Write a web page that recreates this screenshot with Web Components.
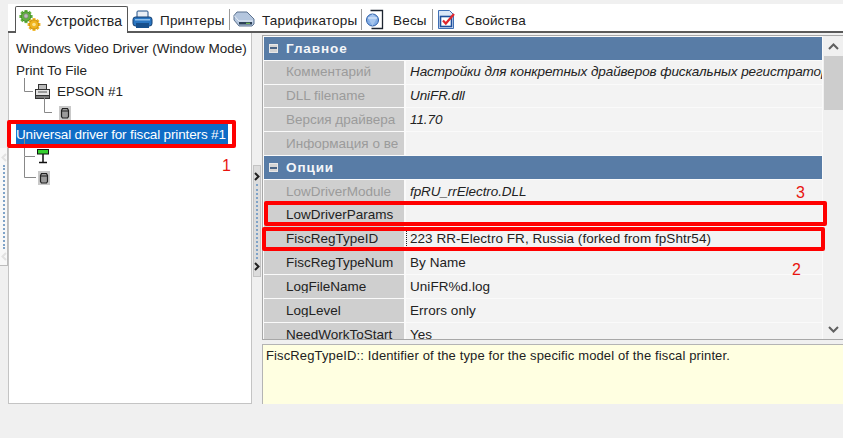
<!DOCTYPE html>
<html lang="ru"><head><meta charset="utf-8"><title>Устройства</title>
<style>
html,body{margin:0;height:100%;overflow:hidden;background:#f0f0f0}
body{font:13px/1 "Liberation Sans",Arial,sans-serif;color:#222}
</style></head><body>
<x-app>
  <x-tabs slot="tabs">
    <x-tab active label="Устройства" icon="gears" w="75"></x-tab>
    <x-tab label="Принтеры" icon="printer" w="64" gap="7" pl="4"></x-tab>
    <x-tab label="Тарификаторы" icon="disk" w="94" gap="7" pl="3"></x-tab>
    <x-tab label="Весы" icon="scale" w="34" gap="8" pl="3"></x-tab>
    <x-tab label="Свойства" icon="props" w="60" gap="9" pl="4" last></x-tab>
  </x-tabs>
  <x-tree slot="tree">
    <x-node label="Windows Video Driver (Window Mode)"></x-node>
    <x-node label="Print To File"></x-node>
    <x-node label="EPSON #1" icon="printer" level="1"></x-node>
    <x-node icon="drawer" level="2"></x-node>
    <x-node label="Universal driver for fiscal printers #1" selected></x-node>
    <x-node icon="display" level="1" kind="mid"></x-node>
    <x-node icon="drawer" level="1" kind="end"></x-node>
  </x-tree>
  <x-grid slot="grid">
    <x-section label="Главное"></x-section>
    <x-prop label="Комментарий" value="Настройки для конкретных драйверов фискальных регистраторов" dim ital></x-prop>
    <x-prop label="DLL filename" value="UniFR.dll" dim ital></x-prop>
    <x-prop label="Версия драйвера" value="11.70" dim ital></x-prop>
    <x-prop label="Информация о версии" dim></x-prop>
    <x-section label="Опции"></x-section>
    <x-prop label="LowDriverModule" value="fpRU_rrElectro.DLL" dim ital></x-prop>
    <x-prop label="LowDriverParams"></x-prop>
    <x-prop label="FiscRegTypeID" value="223 RR-Electro FR, Russia (forked from fpShtr54)" focus></x-prop>
    <x-prop label="FiscRegTypeNum" value="By Name"></x-prop>
    <x-prop label="LogFileName" value="UniFR%d.log"></x-prop>
    <x-prop label="LogLevel" value="Errors only"></x-prop>
    <x-prop label="NeedWorkToStart" value="Yes"></x-prop>
  </x-grid>
  <x-help slot="help">FiscRegTypeID:: Identifier of the type for the specific model of the fiscal printer.</x-help>
  <x-callout slot="over" x="7" y="120" w="229" h="28" n="1" nx="222" ny="157"></x-callout>
  <x-callout slot="over" x="264" y="201" w="563" h="25" n="3" nx="796" ny="184"></x-callout>
  <x-callout slot="over" x="262" y="227" w="563" h="24" n="2" nx="792" ny="261"></x-callout>
</x-app>
<script>
const gear=(cx,cy,r,f,s)=>{let t="";for(let i=0;i<8;i++){t+=`<rect x="${cx-1.5}" y="${cy-r-1.8}" width="3" height="3.500" fill="${f}" transform="rotate(${i*45} ${cx} ${cy})"/>`}return t+`<circle cx="${cx}" cy="${cy}" r="${r}" fill="${f}" stroke="${s}" stroke-width=".7"/>`};
const ICONS={
gears:`<svg width="22" height="21" viewBox="0 0 22 21">${gear(7,6.500,4.800,"#63b33f","#3a7a26")}<circle cx="7" cy="6" r="2.200" fill="#bdbdbd" stroke="#777" stroke-width=".6"/>${gear(15,14.500,4.600,"#f0b41e","#b7800c")}<circle cx="15" cy="14.500" r="1.800" fill="#fbe38f"/></svg>`,
printer:`<svg width="21" height="20" viewBox="0 0 21 20"><rect x="5" y="1" width="11" height="7" rx="1" fill="#e9eff6" stroke="#1f4f86"/><rect x="1" y="7" width="19" height="9" rx="2.500" fill="#2a76c2" stroke="#143f70"/><rect x="4" y="13" width="13" height="5" fill="#164f8c"/><rect x="3" y="9" width="15" height="1.500" fill="#8fc0ec"/></svg>`,
disk:`<svg width="22" height="20" viewBox="0 0 22 20"><path d="M1 5.500 4 2h10l7 7v5l-2 2H6L1 10z" fill="#b4c6de" stroke="#5d7390"/><path d="M1.500 6 6 11h14" fill="none" stroke="#e6eef8"/><path d="M6 12h13v2.500H6z" fill="#2e4258"/><rect x="13" y="12.800" width="4" height="1" fill="#7fd05a"/></svg>`,
scale:`<svg width="20" height="21" viewBox="0 0 20 21"><path d="M5.500 1.500h12v18h-11" fill="#fff" stroke="#1c2430" stroke-width="1.300"/><circle cx="7.500" cy="11" r="6" fill="#84aee6" stroke="#2c5ea8"/><path d="M3 9l4.500-4 4.500 4-4.500 8z" fill="#a6c6ef"/><path d="M3 9h9" stroke="#e4effc"/></svg>`,
props:`<svg width="19" height="21" viewBox="0 0 19 21"><path d="M1.500 1.500h11l4 4v14h-15z" fill="#d9e6f7" stroke="#3f6fb5"/><rect x="3.500" y="7.500" width="11" height="10" fill="#fff" stroke="#1e4f9c" stroke-width="1.600"/><path d="M6 11.500l2.800 3L17 5" fill="none" stroke="#e0262c" stroke-width="2.200"/></svg>`,
treeprinter:`<svg width="17" height="17" viewBox="0 0 17 17"><rect x="4.500" y="1.500" width="8" height="5" fill="#bbb" stroke="#333"/><rect x="1.500" y="6.500" width="14" height="6" fill="#e4e4e4" stroke="#333"/><rect x="1.500" y="12.500" width="14" height="3" fill="#777" stroke="#333"/><path d="M4 9h9" stroke="#555"/></svg>`,
drawer:`<svg width="12" height="14" viewBox="0 0 12 14"><rect width="12" height="14" fill="#c9c9c9"/><path d="M3.500 2.500h5l1 2v6l-1 1.500h-5l-1-1.500v-6z" fill="#9a9a9a" stroke="#222" stroke-width="1.200"/><path d="M3 5h6" stroke="#222"/></svg>`,
display:`<svg width="12" height="15" viewBox="0 0 12 15"><rect x=".5" y=".5" width="11" height="4.500" fill="#35d02f" stroke="#111"/><path d="M6 5v8M2 13.500h8" stroke="#111" stroke-width="1.500"/></svg>`
};
const chev=(c,d)=>`<svg width="6" height="9" viewBox="0 0 6 9"><path d="${d}" fill="none" stroke="${c}" stroke-width="2"/></svg>`;
const def=(name,css,html)=>customElements.define(name,class extends HTMLElement{
  connectedCallback(){
    if(this.shadowRoot)return;
    const a=n=>this.getAttribute(n)??"";
    this.attachShadow({mode:"open"}).innerHTML=`<style>${css}</style>`+html(a,n=>this.hasAttribute(n));
  }});
def("x-app",`
:host{display:flex;flex-direction:column;width:843px;height:438px;position:relative;overflow:hidden;background:#f0f0f0}
.top{height:4px;flex:none}
.tabs{flex:none;margin-left:8px}
main{flex:none;height:371px;display:flex}
.gut{width:8px;flex:none;padding-top:115px;box-sizing:border-box}
.grip{height:118px;background:#f8f8f8;border-right:1px solid #bcbcbc;border-bottom:1px solid #bcbcbc;box-sizing:border-box;display:flex;flex-direction:column;align-items:center;justify-content:space-between;padding:5px 0 4px}
.tree{width:244px;flex:none;display:flex}
.split{width:10px;flex:none;padding-top:132px;box-sizing:border-box}
.btn{height:112px;margin:0 1px;background:#dcdcdc;border:1px solid #c4c4c4;box-sizing:border-box;display:flex;flex-direction:column;align-items:center;justify-content:space-between;padding:6px 0 5px}
.dots{flex:1;width:0;margin:3px 0;border-left:2px dotted #7fa3c8}
.right{flex:1;min-width:0;display:flex;flex-direction:column;padding-top:2px}
.grid{height:305px;flex:none;display:flex}
.help{height:60px;margin-top:4px;flex:none;display:flex}
`,()=>`<div class="top"></div><div class="tabs"><slot name="tabs"></slot></div>
<main><div class="gut"><div class="grip">${chev("#e2e2e2","M5 1 1.500 4.500 5 8")}<i class="dots"></i>${chev("#e2e2e2","M5 1 1.500 4.500 5 8")}</div></div><div class="tree"><slot name="tree"></slot></div>
<div class="split"><div class="btn">${chev("#222","M1 1 4.500 4.500 1 8")}<i class="dots"></i>${chev("#222","M1 1 4.500 4.500 1 8")}</div></div>
<div class="right"><div class="grid"><slot name="grid"></slot></div><div class="help"><slot name="help"></slot></div></div></main>
<slot name="over"></slot>`);
def("x-tabs",`:host{display:flex;height:29px;box-sizing:border-box;background:#fff;padding-left:7px;padding-top:2px;border-bottom:2px solid #5a5a5a;align-items:stretch}`,()=>`<slot></slot>`);
def("x-tab",`
:host{display:flex;align-items:center;color:#222;font-size:13.500px;white-space:nowrap}
:host([active]){height:27px;background:#fff;border:1px solid #555;border-bottom:0;border-radius:2px 2px 0 0;box-sizing:border-box;width:113px;padding-left:3px;z-index:1;font-size:14px}
:host([active]) svg{margin-right:6px}
svg{display:block;flex:none}
:host(:not([active])){padding-right:5px;border-right:1px solid #9a9a9a;height:21px;margin-top:3px}
:host([last]){border-right:0!important}
span{display:block;letter-spacing:.2px;padding-top:2px}
`,a=>`<style>:host{padding-left:${a("pl")||3}px}svg{margin-right:${a("gap")||7}px}span{width:${a("w")}px}</style>${ICONS[a("icon")]}<span>${a("label")}</span>`);
def("x-tree",`:host{display:block;flex:1;background:#fff;border:1px solid #c4c4c4;border-top:0;padding:5px 0 0 0;box-sizing:border-box}`,()=>`<slot></slot>`);
def("x-node",`
:host{display:flex;align-items:center;height:21.500px;font-size:13.500px;color:#222;white-space:nowrap}
.sel{background:#0f6cc6;color:#fff;outline:1px dotted #fff;height:22px;line-height:21px;box-sizing:border-box;width:212px;margin-top:1px;letter-spacing:-.14px}
.c{flex:none;display:block;overflow:visible}
.t{display:block}.ic{display:flex;flex:none;margin-right:6px}
`,(a,h)=>{
  const lv=+a("level")||0,k=a("kind"),ic=a("icon");
  let left=7,conn="";
  if(lv==1&&!k){conn=`<svg class="c" width="10" height="20" style="margin-left:15px"><path d="M.5-4V9.500H9" fill="none" stroke="#888"/></svg>`;left=0}
  if(lv==2){conn=`<svg class="c" width="15" height="20" style="margin-left:35px"><path d="M.5-6V9.500H8" fill="none" stroke="#888"/></svg>`;left=0}
  if(k=="mid"){conn=`<svg class="c" width="13" height="20" style="margin-left:15px"><path d="M.5-8V10.500H11" fill="none" stroke="#888"/></svg>`;left=0}
  if(k=="end"){conn=`<svg class="c" width="14" height="20" style="margin-left:15px"><path d="M.5-11V9.500H12" fill="none" stroke="#888"/></svg>`;left=0}
  const key=ic=="printer"?"treeprinter":ic;
  return `<div style="width:${left}px;flex:none"></div>${conn}${ic?`<span class="ic">${ICONS[key]}</span>`:""}${a("label")?`<span class="t ${h("selected")?"sel":""}">${a("label")}</span>`:""}`;
});
def("x-grid",`
:host{display:flex;flex:1;min-width:0;border-left:1px solid #a8a8a8;border-top:1px solid #a8a8a8;border-bottom:1px solid #a8a8a8;box-sizing:border-box;overflow:hidden}
.list{flex:1;min-width:0;padding:1px 0 0 1px;overflow:hidden;display:flex;flex-direction:column;gap:1px;background:#fafafa}
.sb{width:21px;flex:none;background:#f0f0f0;display:flex;flex-direction:column;border-left:1px solid #fafafa;box-sizing:border-box;align-items:stretch}
.a{height:20px;display:flex;align-items:center;justify-content:center;flex:none}
.thumb{height:54px;background:#cdcdcd;flex:none;margin:0 0 0 1px}
.fill{flex:1}
`,()=>`<div class="list"><slot></slot></div><div class="sb">
<div class="a"><svg width="11" height="7"><path d="M1 6 5.500 1.500 10 6" fill="none" stroke="#606060" stroke-width="2"/></svg></div>
<div class="thumb"></div><div class="fill"></div>
<div class="a"><svg width="11" height="7"><path d="M1 1 5.500 5.500 10 1" fill="none" stroke="#606060" stroke-width="2"/></svg></div></div>`);
def("x-section",`
:host{display:flex;align-items:center;height:22.830px;flex:none;background:#587ca6;color:#f4f6f9;font-weight:bold;font-size:13.500px;letter-spacing:.9px;padding-left:5px;box-sizing:border-box}
b{width:9px;height:9px;background:#d4d4d4;border:1px solid #e8e8e8;margin-right:8px;display:flex;align-items:center;justify-content:center;box-sizing:border-box}
b::after{content:"";width:7px;height:2px;background:#4a6485}
`,a=>`<b></b><span>${a("label")}</span>`);
def("x-prop",`
:host{display:flex;height:22.830px;flex:none;font-size:13.500px;color:#222;white-space:nowrap}
.l{width:140px;flex:none;background:#cfcfcf;padding-left:22px;box-sizing:border-box;display:flex;align-items:center;overflow:hidden;margin-right:2px}
.l.d{color:#9b9b9b}
.l span{display:block;overflow:hidden;width:112px}
.v{flex:1;min-width:0;background:#f3f3f3;display:flex;align-items:center;padding-left:4px;overflow:hidden;letter-spacing:.05px;box-sizing:border-box}
.v.i{font-style:italic;letter-spacing:-.08px}
.v.f{border-left:1px dotted #222;border-right:1px dotted #555;padding-left:3px}
`,(a,h)=>`<div class="l ${h("dim")?"d":""}"><span>${a("label")}</span></div><div class="v ${h("ital")?"i":""} ${h("focus")?"f":""}">${a("value")}</div>`);
def("x-help",`:host{display:block;flex:1;background:#ffffe1;border:1px solid #b4b4b4;border-bottom:0;padding:4px 3px;box-sizing:border-box;font-size:13px;color:#222;letter-spacing:.13px;border-right:0}`,()=>`<slot></slot>`);
def("x-callout",`
:host{display:block;position:absolute;inset:0;pointer-events:none}
.b{position:absolute;box-sizing:border-box;border:4px solid #f00;border-radius:2px}
.n{position:absolute;color:#e8130f;font:16px "Liberation Sans",sans-serif}
`,a=>`<div class="b" style="left:${a("x")}px;top:${a("y")}px;width:${a("w")}px;height:${a("h")}px"></div><span class="n" style="left:${a("nx")}px;top:${a("ny")}px">${a("n")}</span>`);
</script>
</body></html>
